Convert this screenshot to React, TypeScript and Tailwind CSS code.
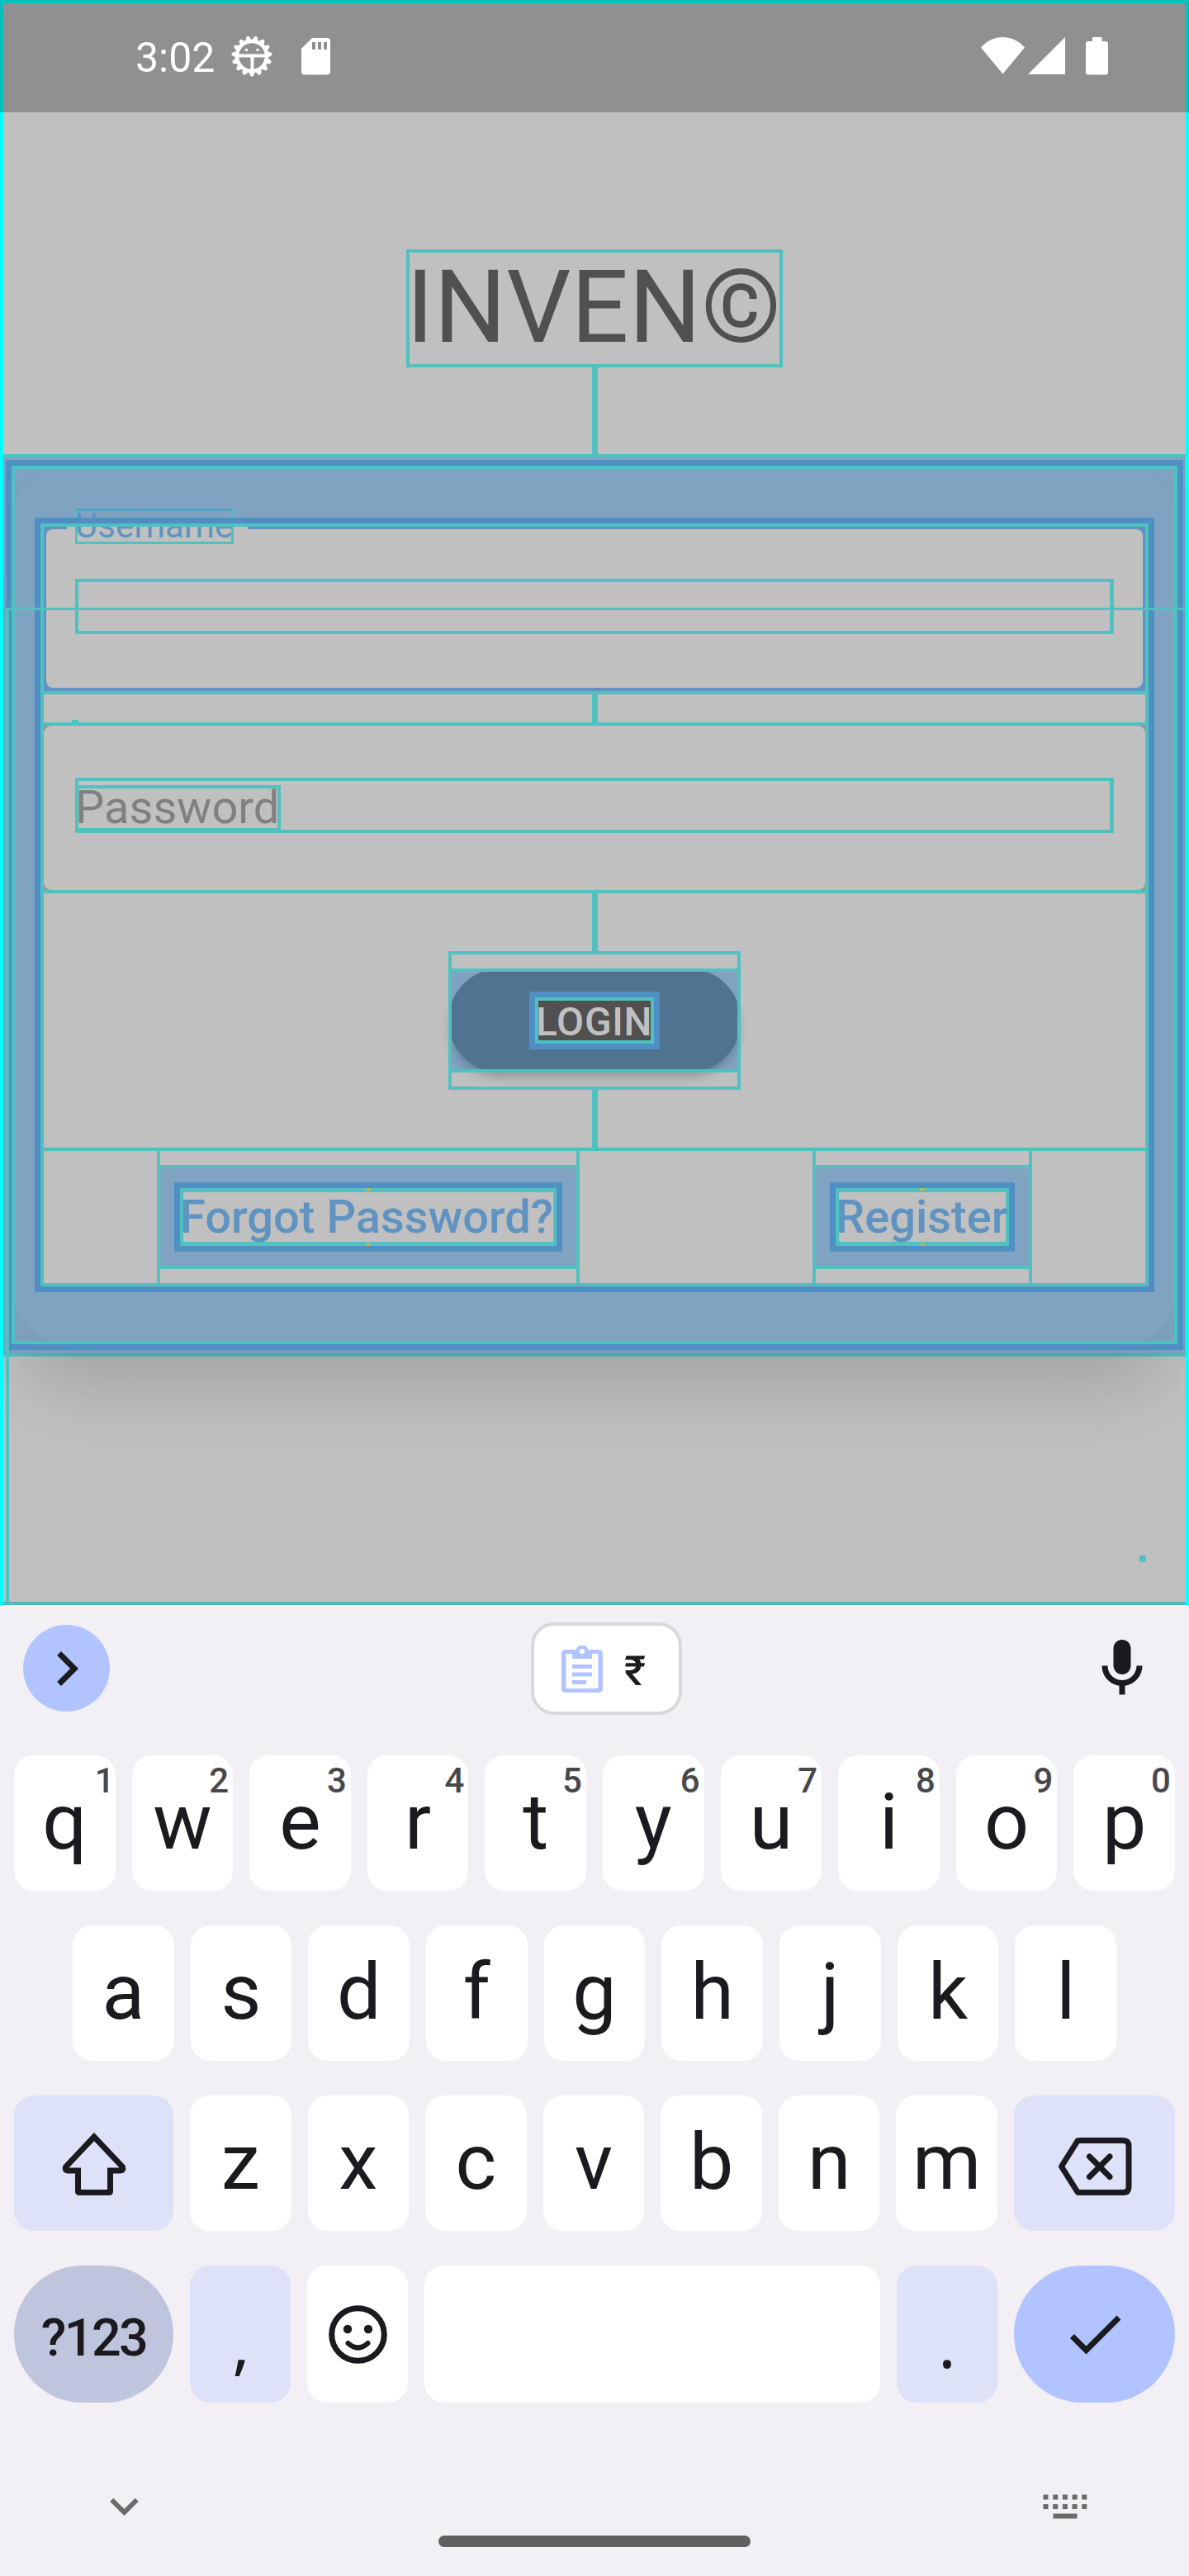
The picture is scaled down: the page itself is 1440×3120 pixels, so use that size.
import type { ReactNode } from "react";

function Connector({ className }: { className: string }) {
  return <div className={`mx-auto w-[7px] bg-[#50c1c1] ${className}`} />;
}

function StatusBar() {
  return (
    <div className="flex h-[136px] items-start border-x-4 border-t-4 border-[#00c0c0] bg-[#909090]">
      <span className="ml-[160px] mt-[36px] w-[100px] whitespace-nowrap text-[50px] leading-[60px] text-white">3:02</span>
      <svg className="ml-[16px] mt-[39px]" width="50" height="50" viewBox="-25 -25 50 50">
        {Array.from({ length: 15 }, (_, i) => (
          <path key={i} d="M-4.600 -17 L-2 -23.400 Q0 -26 2 -23.400 L4.600 -17 Z" fill="#fff" transform={`rotate(${12 + i * 24})`} />
        ))}
        <circle r="18" fill="none" stroke="#fff" strokeWidth="4.500" />
        <path d="M-16 -0.500 H16 M0.500 0 V16" stroke="#fff" strokeWidth="4" />
        <circle cx="-6.500" cy="-7.500" r="1.800" fill="#fff" />
        <circle cx="7" cy="-7.500" r="1.800" fill="#fff" />
      </svg>
      <svg className="ml-[35px] mt-[42px]" width="35" height="45" viewBox="0 0 35 45">
        <path d="M13 0 H31 Q35 0 35 4 V41 Q35 44.500 31 44.500 H4 Q0 44.500 0 41 V13 Z" fill="#fff" />
        <path d="M13 5h4v9h-4z M20 5h4v9h-4z M27 5h4v9h-4z" fill="#909090" />
      </svg>
      <svg className="ml-auto mt-[41px]" width="53" height="45" viewBox="0 0 53 45">
        <path d="M0 12.500 Q11 0 26.500 0 Q42 0 53 12.500 L26.500 44.500 Z" fill="#fff" />
      </svg>
      <svg className="ml-[4px] mt-[41px]" width="45" height="45" viewBox="0 0 45 45">
        <path d="M0 45 L45 0 V45 Z" fill="#fff" />
      </svg>
      <svg className="ml-[25px] mr-[94px] mt-[41px]" width="27" height="46" viewBox="0 0 27 46">
        <path d="M8 0 H19.500 V5 H24 Q27 5 27 8 V42.500 Q27 45.500 24 45.500 H3 Q0 45.500 0 42.500 V8 Q0 5 3 5 H8 Z" fill="#fff" />
      </svg>
    </div>
  );
}

function TextButton({ label, width, text }: { label: string; width: string; text: string }) {
  return (
    <div className={`h-[168px] shrink-0 border-4 border-[#50c1c1] pt-[17px] ${width}`}>
      <div className="-mx-1 flex h-[126px] items-center justify-center border-4 border-[#50c1c1] bg-[#80a3c1]">
        <div className="border-[7px] border-[#508fc3]">
          <div className={`relative h-[70px] border-x-4 border-y-[5px] border-[#50c1c1] bg-[#c0c0c0] ${text}`}>
            <span className="-ml-[4px] flex whitespace-nowrap text-[56px] font-medium leading-[60px] text-[#5f93c1]">
              {label}
            </span>
            <svg className="absolute -top-[5px] left-1/2 -ml-1" width="8" height="5">
              <path d="M0 0H8L4 5Z" fill="#c1b750" />
            </svg>
            <svg className="absolute -bottom-[5px] left-1/2 -ml-1" width="8" height="5">
              <path d="M0 5H8L4 0Z" fill="#c1b750" />
            </svg>
          </div>
        </div>
      </div>
    </div>
  );
}

function LoginCard() {
  return (
    <div className="relative mx-1 h-[1093px] border-y-4 border-[#50c1c1] bg-[#80a3c1] px-[3px] pt-[3px]">
      <div className="absolute inset-x-[10px] bottom-[11px] top-[10px] rounded-[70px] bg-[#80a3c1] shadow-[0_65px_90px_-15px_rgba(0,0,0,0.155)]" />
      <div className="absolute inset-0 bg-[#80a3c1]/65" />
      <div className="relative h-[1078px] border-[7px] border-[#508fc3]">
        <div className="h-full border-4 border-[#50c1c1] px-[24px] pt-[59px]">
          <div className="relative h-[938px] p-[11px]">
            <div className="h-full bg-[#c0c0c0]">
              {/* Username field */}
              <div className="relative h-[199px] bg-[#5f93c1] px-[3px] pb-[4px] pt-[3px]">
                <div className="absolute left-[28px] top-0 h-[3px] w-[219px] bg-[#c0c0c0]" />
                <div className="absolute -top-[22px] left-[38px] h-[43px] w-[192px] border-[3px] border-[#50c1c1] border-t-[#50a4c3] text-[42px] leading-[36px] text-[#5f93c1]">
                  <span className="-ml-[3px] tracking-[0.1px]">Username</span>
                </div>
                <div className="h-full rounded-[8px] bg-[#c0c0c0] pl-[35px] pr-[35px] pt-[60px]">
                  <div className="h-[67px] border-4 border-r-[5px] border-[#50c1c1]" />
                </div>
              </div>
              <div className="h-[4px] bg-[#50c1c1]" />
              <div className="relative h-[34px]">
                <Connector className="h-full" />
                <div className="absolute bottom-0 left-[34px] h-[3px] w-[8px] bg-[#50c1c1]" />
              </div>
              {/* Password field */}
              <div className="h-[207px] border-y-4 border-[#50c1c1] bg-[#959595]">
                <div className="h-full rounded-[9px] bg-[#c0c0c0] px-[38px] pt-[63px]">
                  <div className="h-[67px] border-4 border-r-[5px] border-[#50c1c1] pt-[5px]">
                    <div className="-ml-1 h-[58px] w-[249px] border-4 border-b-[6px] border-[#50c1c1] text-[56px] leading-[46px] text-[#808080]">
                      <span className="-ml-[4px]">Password</span>
                    </div>
                  </div>
                </div>
              </div>
              <Connector className="h-[70px]" />
              {/* Login button */}
              <div className="relative mx-auto h-[168px] w-[354px] pt-[21px]">
                <div className="relative h-[126px] bg-[#80a3c1]">
                  <div className="flex h-full items-center justify-center rounded-full bg-[#50738f] shadow-[0_8px_12px_-2px_rgba(0,0,0,0.22)]">
                    <div className="border-[7px] border-[#508fc3]">
                      <div className="flex h-[56px] w-[144px] border-4 border-[#50c1c1] bg-[#505050] text-[48px] font-medium leading-[51px] tracking-[0.7px] text-[#c0c0c0]">
                        <span className="-ml-[3px]">LOGIN</span>
                      </div>
                    </div>
                  </div>
                  <div className="absolute inset-0 border-4 border-[#50c1c1]" />
                </div>
                <div className="absolute inset-0 border-4 border-[#50c1c1]" />
              </div>
              <Connector className="h-[70px]" />
              <div className="flex h-[168px] gap-[282px] border-t-4 border-[#50c1c1] pl-[137px]">
                <div className="-mt-1">
                  <TextButton label="Forgot Password?" width="w-[512px]" text="w-[456px]" />
                </div>
                <div className="-mt-1">
                  <TextButton label="Register" width="w-[266px]" text="w-[210px]" />
                </div>
              </div>
            </div>
            <div className="absolute inset-0 border-[7px] border-[#508fc3]">
              <div className="h-full border-4 border-[#50c1c1]" />
            </div>
          </div>
        </div>
      </div>
    </div>
  );
}

function AppScreen() {
  return (
    <div className="relative h-[1944px] overflow-hidden bg-[#c0c0c0]">
      <StatusBar />
      <div className="mx-auto mt-[166px] h-[143px] w-[456px] border-4 border-[#50c1c1] text-[123px] leading-[132px] text-[#505050]">
        <span className="-ml-[4px] whitespace-nowrap">INVEN©</span>
      </div>
      <Connector className="h-[105px]" />
      <LoginCard />
      {/* Bounds overlays */}
      <div className="absolute bottom-0 left-[7px] right-0 top-[736px] border-l-4 border-t-[3px] border-[#50c1c1]" />
      <div className="absolute inset-x-0 bottom-0 h-[4px] bg-[#50b9b9]" />
      <div className="absolute left-[1380px] top-[1884px] size-[8px] bg-[#50c1c1]" />
      <div className="absolute inset-x-0 bottom-0 top-[136px] border-x-4 border-[#00ffff]" />
    </div>
  );
}

function Key({ children, hint, className = "bg-white flex-1" }: { children?: ReactNode; hint?: string; className?: string }) {
  return (
    <div className={`relative flex h-full items-center justify-center rounded-[24px] text-[95px] leading-none ${className}`}>
      {children}
      {hint && (
        <span
          className={`absolute top-[10px] text-[42px] font-medium leading-[42px] text-[#48484b] ${hint === "1" ? "right-[1px]" : "right-[5px]"}`}
        >
          {hint}
        </span>
      )}
    </div>
  );
}

function Letter({ children }: { children: string }) {
  return <span className="-mt-[3px]">{children}</span>;
}

function Keyboard() {
  return (
    <div className="h-[1176px] bg-[#f2f0f5] text-[#1b1b1f]">
      <div className="flex h-[182px] items-start">
        <div className="ml-[28px] mt-[24px] flex size-[105px] items-center justify-center rounded-full bg-[#b1c4ff]">
          <svg width="84" height="84" viewBox="0 0 24 24" fill="currentColor">
            <path d="M10 6L8.590 7.410 13.170 12l-4.580 4.590L10 18l6-6z" />
          </svg>
        </div>
        <div className="ml-[510px] mt-[21px] flex h-[112px] w-[183px] items-start rounded-[28px] border-4 border-[#d8d7da] bg-white">
          <svg className="ml-[33px] mt-[22px] shrink-0" width="50" height="60" viewBox="0 0 50 60" fill="#b1c4ff">
            <path fillRule="evenodd" d="M5 7H17.500A8 8 0 0 1 32.500 7H45Q50 7 50 12V54Q50 59 45 59H5Q0 59 0 54V12Q0 7 5 7Z M5.500 12V54H44.500V12H37V18H13V12Z M25 6A3 3 0 1 0 25 12A3 3 0 1 0 25 6Z" />
            <path d="M13 25H37V30H13Z M13 34.500H37V39.500H13Z M13 44H30V49H13Z" />
          </svg>
          <span className="ml-[26px] mt-[27px] text-[50px] font-medium leading-[56px]">₹</span>
        </div>
        <svg className="ml-[491px] mt-[35px]" width="84" height="84" viewBox="0 0 24 24" fill="currentColor">
          <path d="M12 14c1.660 0 3-1.340 3-3V5c0-1.660-1.340-3-3-3S9 3.340 9 5v6c0 1.660 1.340 3 3 3z M17 11c0 2.760-2.240 5-5 5s-5-2.240-5-5H5c0 3.530 2.610 6.430 6 6.920V21h2v-3.080c3.390-.49 6-3.390 6-6.920h-2z" />
        </svg>
      </div>

      <div className="flex flex-col gap-[42px] px-[17px]">
        <div className="flex h-[164px] gap-[20px]">
          {"qwertyuiop".split("").map((c, i) => (
            <Key key={c} hint={"1234567890"[i]}>
              <Letter>{c}</Letter>
            </Key>
          ))}
        </div>
        <div className="flex h-[164px] gap-[20px] px-[71px]">
          {"asdfghjkl".split("").map((c) => (
            <Key key={c}>
              <Letter>{c}</Letter>
            </Key>
          ))}
        </div>
        <div className="flex h-[164px] gap-[20px]">
          <Key className="w-[193px] shrink-0 bg-[#dde2f8]">
            <svg width="80" height="78" viewBox="0 0 80 78" fill="none" stroke="currentColor" strokeWidth="7" className="-mt-[1px]">
              <path d="M40 7 L5.500 43.500 Q4 48 8.500 48 H20.500 V73 Q20.500 74.500 22 74.500 H58 Q59.500 74.500 59.500 73 V48 H71.500 Q76 48 74.500 43.500 Z" />
            </svg>
          </Key>
          {"zxcvbnm".split("").map((c) => (
            <Key key={c}>
              <Letter>{c}</Letter>
            </Key>
          ))}
          <Key className="w-[195px] shrink-0 bg-[#dde2f8]">
            <svg width="92" height="72" viewBox="0 0 92 72" fill="none" stroke="currentColor" strokeWidth="7" className="mt-[7px]">
              <path d="M5.500 36 L25 5 Q26 4.500 28 4.500 H80 Q87 4.500 87 11 V61 Q87 67.500 80 67.500 H28 Q26 67.500 25 67 Z" strokeLinejoin="round" />
              <path d="M39.500 24 L64 48.500 M64 24 L39.500 48.500" strokeLinecap="round" />
            </svg>
          </Key>
        </div>
        <div className="flex h-[166px] gap-[20px]">
          <Key className="w-[193px] shrink-0 rounded-[83px] bg-[#c0c5de]">
            <span className="mt-[8px] text-[63px] font-medium leading-none tracking-[-2.700px]">?123</span>
          </Key>
          <Key className="w-[122px] shrink-0 bg-[#dde2f8]">
            <span className="ml-[2px] mt-[19px] font-['Noto_Sans'] text-[80px]">,</span>
          </Key>
          <Key className="w-[122px] shrink-0 bg-white">
            <svg width="71" height="71" viewBox="0 0 71 71" fill="none" stroke="currentColor" strokeWidth="7">
              <circle cx="35.500" cy="35.500" r="31.800" />
              <path d="M23.500 46 Q35.500 57 47.500 46" strokeWidth="6" strokeLinecap="round" />
              <circle cx="23" cy="29" r="5.200" fill="currentColor" stroke="none" />
              <circle cx="48" cy="29" r="5.200" fill="currentColor" stroke="none" />
            </svg>
          </Key>
          <Key />
          <Key className="w-[122px] shrink-0 bg-[#dde2f8]">
            <span className="mt-[20px] font-['Noto_Sans'] text-[80px]">.</span>
          </Key>
          <Key className="w-[195px] shrink-0 rounded-[83px] bg-[#b1c4ff]">
            <svg width="84" height="84" viewBox="0 0 24 24" fill="currentColor">
              <path d="M9 16.170L4.830 12l-1.420 1.410L9 19 21 7l-1.410-1.410z" />
            </svg>
          </Key>
        </div>
      </div>

      <div className="flex h-[210px] items-start">
        <svg className="ml-[116px] mt-[91px]" width="69" height="69" viewBox="0 0 24 24" fill="#6a6a6a">
          <path d="M16.590 8.590L12 13.170 7.410 8.590 6 10l6 6 6-6z" />
        </svg>
        <div className="ml-[346px] mt-[161px] h-[14px] w-[378px] rounded-full bg-[#606060]" />
        <svg className="ml-[354px] mt-[111px]" width="54" height="30" viewBox="0 0 54 30" fill="#6a6a6a">
          {[0, 11.7, 23.4, 35.1, 46.8].map((x) => (
            <path key={x} d={`M${x + 0.5} 0.500h6v6h-6z M${x + 0.5} 12h6v6h-6z`} />
          ))}
          <path d="M12.500 23.500h29v6h-29z" />
        </svg>
      </div>
    </div>
  );
}

export default function App() {
  return (
    <div className="w-[1440px] overflow-hidden font-[Roboto,sans-serif]">
      <AppScreen />
      <Keyboard />
    </div>
  );
}
